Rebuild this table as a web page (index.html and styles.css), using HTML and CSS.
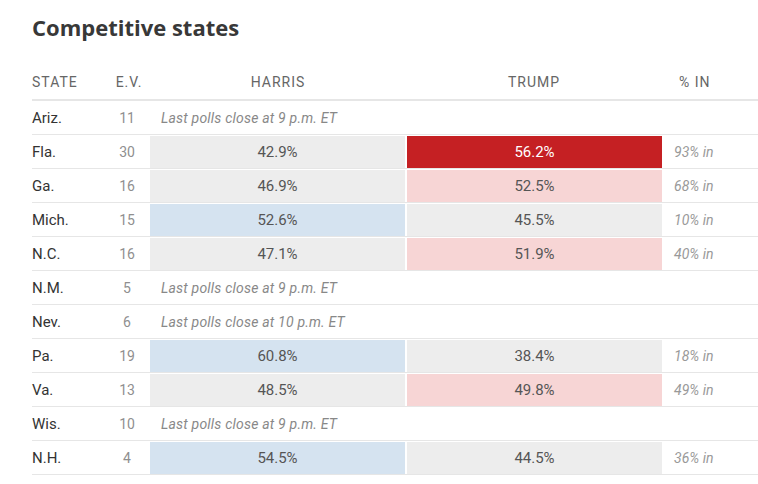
FILE: index.html
```html
<!DOCTYPE html>
<html>
<head>
<meta charset="utf-8">
<link rel="stylesheet" href="styles.css">
</head>
<body>
<div class="page">
  <h1 class="title">Competitive states</h1>
  <div class="table">
    <div class="row head">
      <div class="c-state">STATE</div>
      <div class="c-ev">E.V.</div>
      <div class="c-cand">HARRIS</div>
      <div class="c-cand">TRUMP</div>
      <div class="c-pct">% IN</div>
    </div>
    <div class="row">
      <div class="c-state">Ariz.</div><div class="c-ev">11</div>
      <div class="c-note">Last polls close at 9 p.m. ET</div>
    </div>
    <div class="row">
      <div class="c-state">Fla.</div><div class="c-ev">30</div>
      <div class="c-cand"><div class="cell h gray">42.9%</div></div>
      <div class="c-cand"><div class="cell t red">56.2%</div></div>
      <div class="c-pct">93% in</div>
    </div>
    <div class="row">
      <div class="c-state">Ga.</div><div class="c-ev">16</div>
      <div class="c-cand"><div class="cell h gray">46.9%</div></div>
      <div class="c-cand"><div class="cell t pink">52.5%</div></div>
      <div class="c-pct">68% in</div>
    </div>
    <div class="row">
      <div class="c-state">Mich.</div><div class="c-ev">15</div>
      <div class="c-cand"><div class="cell h blue">52.6%</div></div>
      <div class="c-cand"><div class="cell t gray">45.5%</div></div>
      <div class="c-pct">10% in</div>
    </div>
    <div class="row">
      <div class="c-state">N.C.</div><div class="c-ev">16</div>
      <div class="c-cand"><div class="cell h gray">47.1%</div></div>
      <div class="c-cand"><div class="cell t pink">51.9%</div></div>
      <div class="c-pct">40% in</div>
    </div>
    <div class="row">
      <div class="c-state">N.M.</div><div class="c-ev">5</div>
      <div class="c-note">Last polls close at 9 p.m. ET</div>
    </div>
    <div class="row">
      <div class="c-state">Nev.</div><div class="c-ev">6</div>
      <div class="c-note">Last polls close at 10 p.m. ET</div>
    </div>
    <div class="row">
      <div class="c-state">Pa.</div><div class="c-ev">19</div>
      <div class="c-cand"><div class="cell h blue">60.8%</div></div>
      <div class="c-cand"><div class="cell t gray">38.4%</div></div>
      <div class="c-pct">18% in</div>
    </div>
    <div class="row">
      <div class="c-state">Va.</div><div class="c-ev">13</div>
      <div class="c-cand"><div class="cell h gray">48.5%</div></div>
      <div class="c-cand"><div class="cell t pink">49.8%</div></div>
      <div class="c-pct">49% in</div>
    </div>
    <div class="row">
      <div class="c-state">Wis.</div><div class="c-ev">10</div>
      <div class="c-note">Last polls close at 9 p.m. ET</div>
    </div>
    <div class="row">
      <div class="c-state">N.H.</div><div class="c-ev">4</div>
      <div class="c-cand"><div class="cell h blue">54.5%</div></div>
      <div class="c-cand"><div class="cell t gray">44.5%</div></div>
      <div class="c-pct">36% in</div>
    </div>
  </div>
</div>
</body>
</html>
```

FILE: styles.css
```css
html, body {
  margin: 0;
  padding: 0;
  background: #fff;
  overflow: hidden;
}
body {
  font-family: Roboto, "Liberation Sans", sans-serif;
  color: #333;
}
.page {
  padding: 12px 0 0 32px;
}
.title {
  margin: 0;
  font-family: "Open Sans", Roboto, sans-serif;
  font-size: 22px;
  line-height: 30px;
  font-weight: 700;
  color: #383838;
}
.table {
  margin-top: 17px;
}
.row {
  display: grid;
  grid-template-columns: 72px 46px 256px 256px 1fr;
  height: 33px;
  border-bottom: 1px solid #e6e6e6;
  align-items: center;
}
.row.head {
  height: 40px;
  border-bottom: 2px solid #e6e6e6;
  align-items: start;
  font-size: 14px;
  letter-spacing: 1px;
  color: #666;
}
.row.head > div {
  line-height: 20px;
  padding-top: 13px;
}
.c-state {
  font-size: 15px;
  color: #333;
}
.head .c-state { font-size: 14px; color: #666; }
.c-ev {
  text-align: center;
  font-size: 14px;
  color: #8f8f8f;
}
.head .c-ev { color: #666; padding-left: 4px; }
.c-cand {
  text-align: center;
  height: 100%;
}
.head .c-cand { height: auto; }
.c-note {
  grid-column: 3 / 6;
  padding-left: 11px;
  font-size: 14px;
  font-style: italic;
  color: #888;
  letter-spacing: 0.2px;
}
.c-pct {
  padding-left: 12px;
  font-size: 14px;
  font-style: italic;
  color: #999;
}
.head .c-pct { font-style: normal; padding-left: 17px; color: #666; }
.cell {
  height: 32px;
  margin-top: 1px;
  display: flex;
  align-items: center;
  justify-content: center;
  font-size: 15px;
  color: #555;
}
.cell.h { margin-right: 1px; }
.cell.t { margin-left: 1px; }
.gray { background: #ededed; }
.blue { background: #d5e3f0; }
.pink { background: #f7d5d5; }
.red { background: #c52023; color: #fff; }
```
